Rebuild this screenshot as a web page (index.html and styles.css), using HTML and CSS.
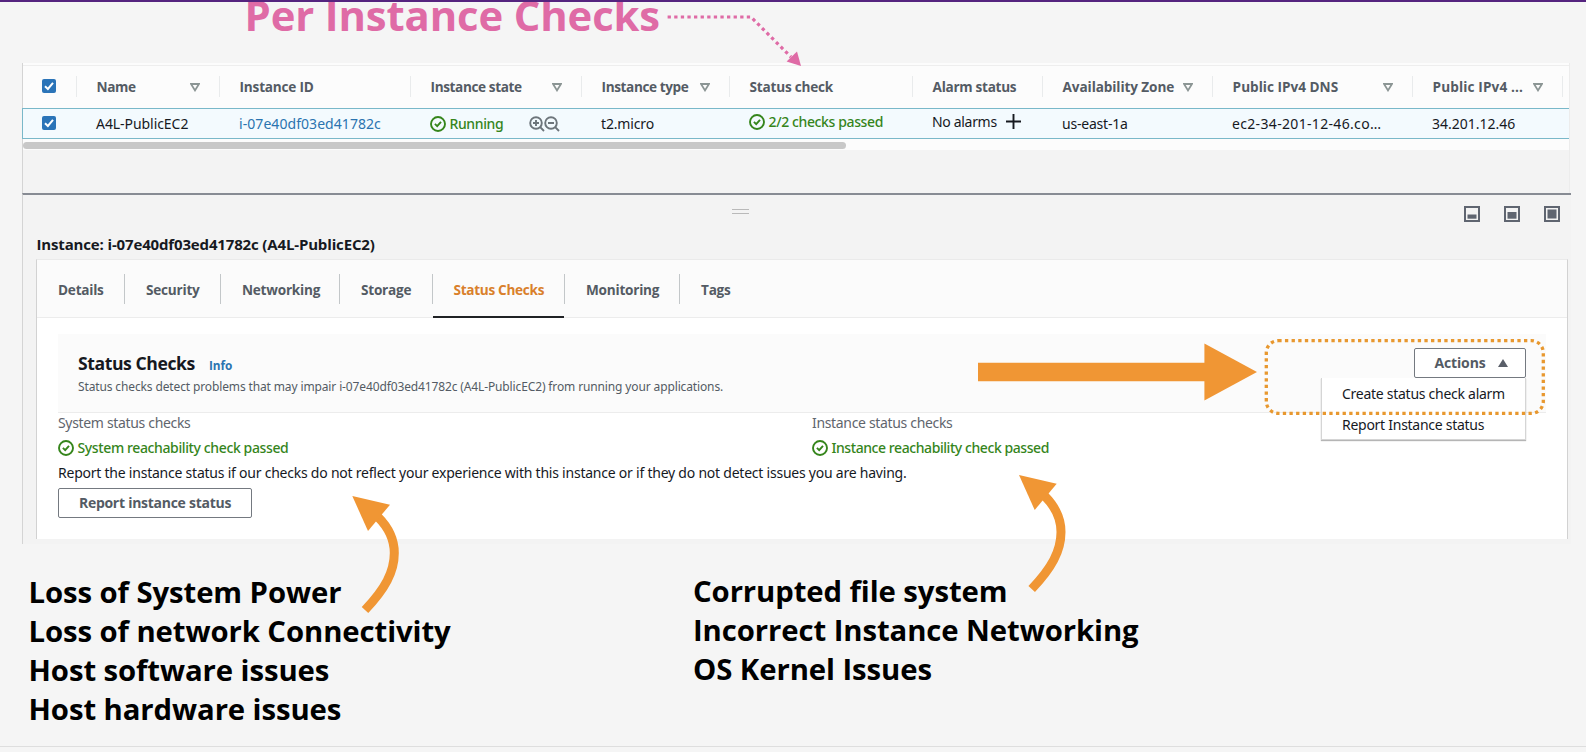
FILE: index.html
```html
<!DOCTYPE html>
<html lang="en">
<head>
<meta charset="utf-8">
<title>Per Instance Checks</title>
<link rel="stylesheet" href="styles.css">
</head>
<body>
<svg class="defs" width="0" height="0" aria-hidden="true">
  <symbol id="ok" viewBox="0 0 16 16"><circle cx="8" cy="8" r="7" fill="none" stroke="currentColor" stroke-width="1.9"/><path d="M4.9 7.9 7.2 10.1 11 5.8" fill="none" stroke="currentColor" stroke-width="1.9"/></symbol>
  <symbol id="sort" viewBox="0 0 10 9"><path d="M1 1H9L5 7.4Z" fill="none" stroke="currentColor" stroke-width="1.8"/></symbol>
  <symbol id="box" viewBox="0 0 14 14"><rect width="14" height="14" rx="2" fill="#2b74b8"/><path d="M3 7.2 5.9 10 11 3.9" fill="none" stroke="#fff" stroke-width="2"/></symbol>
  <symbol id="zin" viewBox="0 0 16 16"><circle cx="7" cy="7" r="5.8" fill="none" stroke="currentColor" stroke-width="1.9"/><path d="M11.2 11.2 15 15M4 7H10M7 4V10" fill="none" stroke="currentColor" stroke-width="1.9"/></symbol>
  <symbol id="zout" viewBox="0 0 16 16"><circle cx="7" cy="7" r="5.8" fill="none" stroke="currentColor" stroke-width="1.9"/><path d="M11.2 11.2 15 15M4 7H10" fill="none" stroke="currentColor" stroke-width="1.9"/></symbol>
  <symbol id="curve" viewBox="0 0 60 130"><path d="M21 120C41 99 50.3 82 50.3 63C50.3 49 44 37 34 27" fill="none" stroke="#f09634" stroke-width="9"/><path d="M8.3 6 46 14.7 24 41Z" fill="#f09634"/></symbol>
</svg>
<main class="slide">
  <header class="slide-top"><h1 class="title">Per Instance Checks</h1></header>
  <section class="console">
    <div class="table">
      <div class="row head">
        <div class="cell check"><svg class="i14"><use href="#box"/></svg></div>
        <div class="cell h-name"><span>Name</span><svg class="sort"><use href="#sort"/></svg></div>
        <div class="cell h-id"><span>Instance ID</span></div>
        <div class="cell h-state"><span>Instance state</span><svg class="sort"><use href="#sort"/></svg></div>
        <div class="cell h-type"><span>Instance type</span><svg class="sort"><use href="#sort"/></svg></div>
        <div class="cell h-check"><span>Status check</span></div>
        <div class="cell h-alarm"><span>Alarm status</span></div>
        <div class="cell h-az"><span>Availability Zone</span><svg class="sort"><use href="#sort"/></svg></div>
        <div class="cell h-dns"><span>Public IPv4 DNS</span><svg class="sort"><use href="#sort"/></svg></div>
        <div class="cell h-ip"><span>Public IPv4 ...</span><svg class="sort"><use href="#sort"/></svg></div>
      </div>
      <div class="row data">
        <div class="cell check"><svg class="i14"><use href="#box"/></svg></div>
        <div class="cell"><span class="t-name">A4L-PublicEC2</span></div>
        <div class="cell"><span class="link">i-07e40df03ed41782c</span></div>
        <div class="cell"><span class="good"><svg class="i16"><use href="#ok"/></svg><span>Running</span></span><span class="zooms"><svg class="i16"><use href="#zin"/></svg><svg class="i16"><use href="#zout"/></svg></span></div>
        <div class="cell"><span class="t-type">t2.micro</span></div>
        <div class="cell raised"><span class="good"><svg class="i16"><use href="#ok"/></svg><span>2/2 checks passed</span></span></div>
        <div class="cell raised"><span class="t-alarm">No alarms</span><svg class="plus" viewBox="0 0 15 15"><path d="M0 7.5H15M7.5 0V15" stroke="#16191f" stroke-width="1.9"/></svg></div>
        <div class="cell"><span class="t-az">us-east-1a</span></div>
        <div class="cell"><span class="t-dns">ec2-34-201-12-46.co…</span></div>
        <div class="cell"><span class="t-ip">34.201.12.46</span></div>
      </div>
      <div class="scroll"><div class="thumb"></div></div>
    </div>
    <div class="gap"></div>
    <div class="split">
      <div class="split-bar">
        <div class="handle"></div>
        <div class="sizes">
          <svg class="i16" viewBox="0 0 16 16"><rect x="1" y="1" width="14" height="14" fill="none" stroke="#5f6570" stroke-width="2"/><rect x="3.5" y="8.5" width="9" height="4.2" fill="#5f6570"/></svg>
          <svg class="i16" viewBox="0 0 16 16"><rect x="1" y="1" width="14" height="14" fill="none" stroke="#5f6570" stroke-width="2"/><rect x="3.5" y="6" width="9" height="6.7" fill="#5f6570"/></svg>
          <svg class="i16" viewBox="0 0 16 16"><rect x="1" y="1" width="14" height="14" fill="none" stroke="#5f6570" stroke-width="2"/><rect x="3.5" y="3.5" width="9" height="9" fill="#5f6570"/></svg>
        </div>
      </div>
      <h2 class="heading"><span>Instance: i-07e40df03ed41782c (A4L-PublicEC2)</span></h2>
      <div class="card">
        <nav class="tabs">
          <a class="tab" style="width:88px">Details</a>
          <a class="tab" style="width:96px">Security</a>
          <a class="tab" style="width:119px">Networking</a>
          <a class="tab" style="width:93px">Storage</a>
          <a class="tab active" style="width:132px">Status Checks</a>
          <a class="tab" style="width:115px">Monitoring</a>
          <a class="tab last">Tags</a>
        </nav>
        <div class="body">
          <div class="section">
            <div class="section-text">
              <div class="section-title"><h3>Status Checks</h3><a class="info">Info</a></div>
              <p class="desc">Status checks detect problems that may impair i-07e40df03ed41782c (A4L-PublicEC2) from running your applications.</p>
            </div>
            <div class="actions">
              <button class="btn actions-btn"><span>Actions</span><svg class="caret" viewBox="0 0 10 8"><path d="M5 0 10 8H0Z" fill="#5a5f69"/></svg></button>
              <div class="menu"><div class="item">Create status check alarm</div><div class="item">Report Instance status</div></div>
            </div>
          </div>
          <div class="checks">
            <div><div class="label">System status checks</div><div class="good"><svg class="i16"><use href="#ok"/></svg><span>System reachability check passed</span></div></div>
            <div><div class="label">Instance status checks</div><div class="good tight"><svg class="i16"><use href="#ok"/></svg><span>Instance reachability check passed</span></div></div>
          </div>
          <p class="report">Report the instance status if our checks do not reflect your experience with this instance or if they do not detect issues you are having.</p>
          <button class="btn report-btn"><span>Report instance status</span></button>
        </div>
      </div>
    </div>
  </section>
  <section class="notes">
    <div class="note left"><p>Loss of System Power</p><p>Loss of network Connectivity</p><p>Host software issues</p><p>Host hardware issues</p></div>
    <div class="note right"><p>Corrupted file system</p><p>Incorrect Instance Networking</p><p>OS Kernel Issues</p></div>
  </section>
  <svg class="overlay" viewBox="0 0 1586 752">
    <path d="M667.6 17H751L791 57" fill="none" stroke="#df6ba6" stroke-width="3.2" stroke-dasharray="3.3 3.3"/>
    <path d="M801 66 786.6 61.5 797 51.5Z" fill="#df6ba6"/>
    <path d="M978 362.7H1204.4V343.5L1257 372 1204.4 400.5V381.3H978Z" fill="#f09634"/>
    <rect x="1266.3" y="340.7" width="277" height="72.7" rx="12" fill="none" stroke="#e8982f" stroke-width="3.3" stroke-dasharray="3.32 3.32"/>
    <use href="#curve" x="344" y="490" width="60" height="130"/>
    <use href="#curve" x="1010.7" y="469" width="60" height="130"/>
  </svg>
</main>
</body>
</html>
```

FILE: styles.css
```css
* { box-sizing: border-box; }
body { margin: 0; font-family: "Noto Sans", "Open Sans", sans-serif; font-size: 14px; color: #16191f; background: #f5f5f5; }
h1, h2, h3, p { margin: 0; }
.defs { position: absolute; }
.slide { position: relative; width: 1586px; height: 752px; overflow: hidden; display: flex; flex-direction: column; background: #f5f5f5; }
.slide::after { content: ""; position: absolute; left: 0; right: 0; bottom: 5px; height: 1px; background: #dedede; }
.slide-top { height: 63px; flex: none; border-top: 2px solid #55247f; padding-left: 244.5px; overflow: hidden; }
.title { font: 700 41.8px/60px "Open Sans", sans-serif; letter-spacing: -0.12px; color: #df6ba6; margin-top: -17px; white-space: nowrap; }
.console { width: 1549px; margin-left: 22px; height: 481px; flex: none; border-left: 1px solid #d4d4d4; display: flex; flex-direction: column; }
.table { width: 1547px; height: 87px; background: #fcfcfc; display: flex; flex-direction: column; border-right: 1px solid #ececec; }
.row { display: grid; grid-template-columns: 54px 143px 191px 171px 148px 183px 130px 170px 200px 150px; white-space: nowrap; }
.head { height: 43px; margin-top: 2px; border-top: 1px solid #eee; font: 700 13.6px/20px "Open Sans", sans-serif; color: #545b64; }
.cell { display: flex; align-items: center; padding: 0 20px 0 19px; }
.head .cell { justify-content: space-between; position: relative; padding: 0 20px 0 19.6px; }
.head .cell::after { content: ""; position: absolute; right: 0; top: 10px; bottom: 11px; width: 1px; background: #e9ebec; }
.head .cell.check { padding: 0 0 2px 19px; }
.h-name, .h-state, .h-type { letter-spacing: -0.4px; }
.h-id, .h-check { letter-spacing: -0.22px; }
.h-alarm { letter-spacing: -0.3px; }
.h-az { letter-spacing: -0.1px; }
.h-ip { letter-spacing: 0.12px; }
.cell.check { padding: 0 0 1px 19px; }
.i14 { width: 14px; height: 14px; }
.i16 { width: 16px; height: 16px; flex: none; }
.sort { width: 10px; height: 9px; color: #8b9594; flex: none; }
.data { height: 31px; border: solid #79b8c9; border-width: 1px 0; background: #f3fafe; color: #16191f; margin-left: -1px; border-left: 1px solid #79b8c9; }
.data .raised { padding-bottom: 4px; }
.link { color: #2b74b0; letter-spacing: 0.06px; }
.t-name { letter-spacing: -0.06px; }
.t-type { letter-spacing: -0.15px; }
.t-alarm, .t-az { letter-spacing: -0.2px; }
.t-alarm { letter-spacing: -0.32px; }
.t-dns { letter-spacing: 0.33px; }
.good { display: flex; align-items: center; gap: 3.5px; color: #35851b; font-weight: 500; letter-spacing: -0.38px; }
.good.tight { letter-spacing: -0.43px; }
.zooms { display: flex; color: #6d757b; margin-left: 26px; }
.zooms .i16 + .i16 { margin-left: -1px; }
.plus { width: 15px; height: 15px; margin-left: 9.5px; }
.scroll { padding-top: 3px; height: 11px; }
.thumb { width: 823px; height: 7px; border-radius: 4px; background: #c8c8c8; }
.gap { height: 43px; width: 1547px; background: #f3f3f3; border-right: 1px solid #ececec; }
.split { border-top: 2px solid #878b93; background: #f3f3f3; flex: 1; width: 1549px; margin-left: -1px; padding-left: 1px; border-left: 1px solid #d4d4d4; }
.split-bar { height: 37px; display: flex; justify-content: space-between; align-items: flex-start; }
.handle { width: 17px; height: 5px; border: solid #b9b9b9; border-width: 1px 0; margin: 14px 0 0 708px; }
.sizes { display: flex; gap: 24px; margin: 11px 11px 0 0; }
.heading { font: 700 15px/24px "Open Sans", sans-serif; letter-spacing: -0.15px; padding-left: 12.5px; height: 27px; color: #16191f; white-space: nowrap; }
.card { margin-left: 12px; width: 1532px; height: 280px; background: #fff; border: solid #d2d2d2; border-width: 1px 1px 0; border-top-color: #eaeaea; }
.tabs { display: flex; height: 58px; background: #fbfbfb; border-bottom: 1px solid #ececec; align-items: center; font: 700 13.6px/20px "Open Sans", sans-serif; letter-spacing: -0.23px; color: #545b64; }
.tab { position: relative; line-height: 31px; height: 30px; padding-left: 21px; border-right: 1px solid #c3c7c9; white-space: nowrap; }
.tab.last { border: 0; }
.tab.active { color: #d9802b; letter-spacing: -0.3px; padding-left: 20.5px; }
.tab.active::after { content: ""; position: absolute; left: 0; right: 0; bottom: -14px; height: 2px; background: #202225; }
.body { padding: 16px 21px 0; }
.section { display: flex; justify-content: space-between; height: 79px; background: #fbfbfb; border-bottom: 1px solid #ececec; padding: 14px 20px 0; }
.section-title { display: flex; align-items: baseline; gap: 14px; height: 30px; line-height: 31px; font-family: "Open Sans", sans-serif; }
h3 { font-size: 17.6px; font-weight: 700; letter-spacing: -0.42px; }
.info { font-size: 11.8px; font-weight: 700; color: #2b74b0; }
.desc { font-size: 12px; line-height: 17px; color: #545b64; white-space: nowrap; letter-spacing: -0.13px; }
.actions { position: relative; }
.btn { font: 700 14px/20px "Open Sans", sans-serif; color: #545b64; background: #fff; border: 1px solid #747980; border-radius: 2px; height: 30px; padding: 0 19.5px; white-space: nowrap; }
.actions-btn { display: flex; align-items: center; justify-content: space-between; width: 112px; padding-right: 17px; letter-spacing: -0.15px; }
.caret { width: 10px; height: 8px; }
.menu { position: absolute; right: 0; top: 30px; width: 205px; height: 62px; background: #fff; border: 1px solid #d5d5d5; border-top: 0; box-shadow: 0 1px 1px #b5b5b5; padding: 0 20px; letter-spacing: -0.27px; }
.item { height: 31px; line-height: 31px; white-space: nowrap; }
.checks { display: grid; grid-template-columns: 754px 1fr; line-height: 20px; }
.label { color: #5f656d; height: 22px; letter-spacing: -0.33px; }
.checks .good { height: 26px; }
.report { line-height: 24px; height: 27px; white-space: nowrap; letter-spacing: -0.23px; }
.report-btn { width: 194px; letter-spacing: -0.27px; }
.notes { position: relative; display: grid; grid-template-columns: 664.5px 1fr; padding: 29px 0 0 28.5px; font: 700 29.3px/39px "Open Sans", sans-serif; letter-spacing: -0.08px; color: #000; white-space: nowrap; }
.note.right { margin-top: -1px; }
.overlay { position: absolute; left: 0; top: 0; width: 1586px; height: 752px; }
```
